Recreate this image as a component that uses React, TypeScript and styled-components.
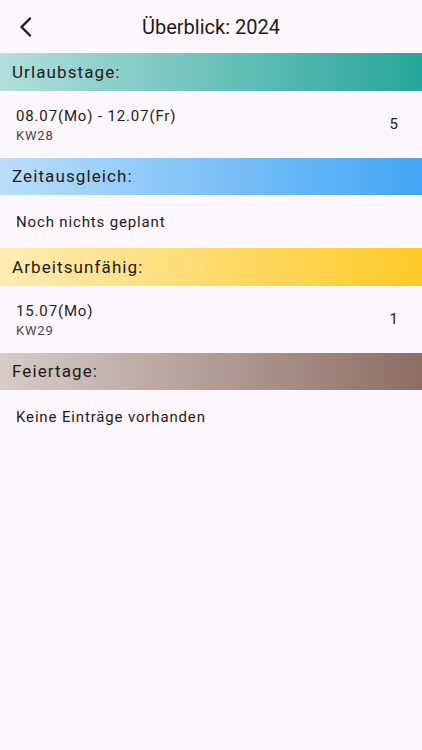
import { styled, createGlobalStyle } from "styled-components";

interface Entry {
  label: string;
  week: string;
  days: number;
}

interface Section {
  title: string;
  from: string;
  to: string;
  entries: Entry[];
  emptyText: string;
}

const sections: Section[] = [
  {
    title: "Urlaubstage:",
    from: "#b2dfdb",
    to: "#26a69a",
    entries: [{ label: "08.07(Mo) - 12.07(Fr)", week: "KW28", days: 5 }],
    emptyText: "",
  },
  {
    title: "Zeitausgleich:",
    from: "#bbdefb",
    to: "#42a5f5",
    entries: [],
    emptyText: "Noch nichts geplant",
  },
  {
    title: "Arbeitsunfähig:",
    from: "#ffecb3",
    to: "#ffca28",
    entries: [{ label: "15.07(Mo)", week: "KW29", days: 1 }],
    emptyText: "",
  },
  {
    title: "Feiertage:",
    from: "#d7ccc8",
    to: "#8d6e63",
    entries: [],
    emptyText: "Keine Einträge vorhanden",
  },
];

const GlobalStyle = createGlobalStyle`
  html, body {
    margin: 0;
    padding: 0;
    background: #fef7ff;
  }
  body {
    font-family: Roboto, "Noto Sans", sans-serif;
    color: #1d1b20;
  }
`;

export default function App() {
  return (
    <>
      <GlobalStyle />
      <Screen>
        <Header>
          <BackButton aria-label="Zurück">
            <svg width="14" height="20" viewBox="0 0 14 20" fill="none">
              <path
                d="M11 1.5 L2.5 10 L11 18.5"
                stroke="#1d1b20"
                strokeWidth="2.4"
                strokeLinecap="round"
                strokeLinejoin="round"
              />
            </svg>
          </BackButton>
          <Title>Überblick: 2024</Title>
        </Header>

        {sections.map((section) => (
          <div key={section.title}>
            <SectionBar $from={section.from} $to={section.to}>
              {section.title}
            </SectionBar>
            {section.entries.length > 0 ? (
              section.entries.map((entry) => (
                <EntryRow key={entry.label}>
                  <EntryText>
                    <EntryLabel>{entry.label}</EntryLabel>
                    <EntryWeek>{entry.week}</EntryWeek>
                  </EntryText>
                  <EntryDays>{entry.days}</EntryDays>
                </EntryRow>
              ))
            ) : (
              <EmptyRow>{section.emptyText}</EmptyRow>
            )}
          </div>
        ))}
      </Screen>
    </>
  );
}

const Screen = styled.div`
  width: 422px;
  min-height: 750px;
  background: #fef7ff;
`;

const Header = styled.div`
  height: 53px;
  position: relative;
  display: flex;
  align-items: center;
  justify-content: center;
`;

const BackButton = styled.button`
  position: absolute;
  left: 14px;
  top: 16px;
  width: 24px;
  height: 22px;
  padding: 0;
  border: none;
  background: none;
  display: flex;
  align-items: center;
  justify-content: center;
`;

const Title = styled.h1`
  margin: 0;
  font-size: 20px;
  font-weight: 400;
  color: #1d1b20;
`;

const SectionBar = styled.div<{ $from: string; $to: string }>`
  height: 37.5px;
  display: flex;
  align-items: center;
  padding-left: 12px;
  background: linear-gradient(to right, ${(p) => p.$from}, ${(p) => p.$to});
  font-size: 17px;
  font-weight: 400;
  letter-spacing: 1.1px;
  color: #1d1b20;
`;

const EntryRow = styled.div`
  height: 67px;
  display: flex;
  align-items: center;
  justify-content: space-between;
  padding: 0 24px 0 16px;
`;

const EntryText = styled.div`
  display: flex;
  flex-direction: column;
  gap: 2px;
  margin-top: 1px;
`;

const EntryLabel = styled.span`
  font-size: 15px;
  letter-spacing: 0.85px;
  color: #1d1b20;
  line-height: 20px;
`;

const EntryWeek = styled.span`
  font-size: 13px;
  letter-spacing: 0.8px;
  color: #49454f;
  line-height: 16px;
`;

const EntryDays = styled.span`
  font-size: 15px;
  color: #1d1b20;
`;

const EmptyRow = styled.div`
  height: 53px;
  display: flex;
  align-items: center;
  padding-left: 16px;
  font-size: 15px;
  letter-spacing: 0.85px;
  color: #1d1b20;
`;
